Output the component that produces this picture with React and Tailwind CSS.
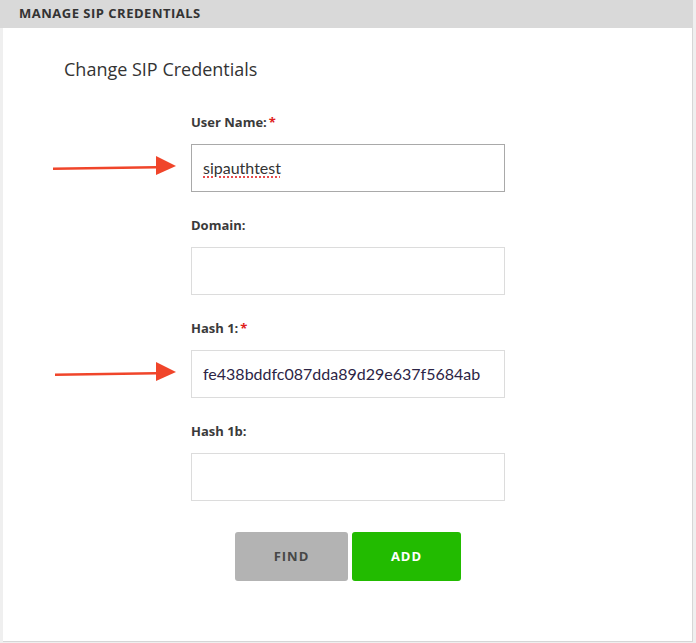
import React from 'react';

// red annotation arrow pointing at a field
function Arrow({ width = 124 }) {
  return (
    <svg width={width} height="24" viewBox={`0 0 ${width} 24`} className="block">
      <path d={`M0 13.5 L${width - 20} 12 L${width - 20} 14.5 L0 16 Z`} fill="#f0452a" />
      <polygon points={`${width - 20},2 ${width},12 ${width - 20},21`} fill="#f0452a" />
    </svg>
  );
}

function Field({ label, required, value, focused, arrow, valueClass = '' }) {
  return (
    <div className="flex flex-col">
      <div className="h-[18px] leading-[18px] text-[13px] font-bold text-[#3a3a3a]">
        {label}
        {required && <span className="text-[#e0201b] ml-[2px]">*</span>}
      </div>
      <div className="relative mt-[13px]">
        {arrow && (
          <div className="absolute right-[100%] mr-[15px] top-[10px]">
            <Arrow width={arrow} />
          </div>
        )}
        <div
          className={`h-[48px] w-[314px] border bg-white flex items-center px-[11px] text-[16px] font-['Lato',sans-serif] ${
            focused ? 'border-[#a9a9a9]' : 'border-[#dcdcdc]'
          }`}
        >
          <span className={valueClass}>{value}</span>
        </div>
      </div>
    </div>
  );
}

export default function App() {
  return (
    <div className="w-[696px] h-[643px] bg-[#efefef] font-['Open_Sans','Lato',sans-serif] overflow-hidden">
      <div className="w-[693px] h-[642px] flex flex-col">
        <div className="h-[28px] bg-[#d9d9d9] flex items-center pl-[19px] text-[13px] font-bold text-[#333] tracking-[0.5px] shrink-0">
          MANAGE SIP CREDENTIALS
        </div>
        <div className="ml-[3px] flex-1 bg-white border-r border-b border-[#d6d6d6]">
          <div className="mt-[29px] pl-[61px] h-[24px] leading-[24px] text-[18px] text-[#333]">
            Change SIP Credentials
          </div>
          <div className="ml-[188px] mt-[32px] flex flex-col gap-[24px] w-[314px]">
            <Field
              label="User Name:"
              required
              value="sipauthtest"
              focused
              arrow={123}
              valueClass="text-[#333] underline decoration-dotted decoration-[#e02020] underline-offset-[3px]"
            />
            <Field label="Domain:" value="" />
            <Field
              label="Hash 1:"
              required
              value="fe438bddfc087dda89d29e637f5684ab"
              arrow={121}
              valueClass="text-[#2c2445]"
            />
            <Field label="Hash 1b:" value="" />
          </div>
          <div className="ml-[232px] mt-[31px] flex gap-[4px]">
            <button className="w-[113px] h-[49px] rounded-[3px] bg-[#b3b3b3] text-[#474747] text-[13px] font-bold tracking-[1px]">
              FIND
            </button>
            <button className="w-[109px] h-[49px] rounded-[3px] bg-[#22bb00] text-white text-[13px] font-bold tracking-[1px]">
              ADD
            </button>
          </div>
        </div>
      </div>
    </div>
  );
}
